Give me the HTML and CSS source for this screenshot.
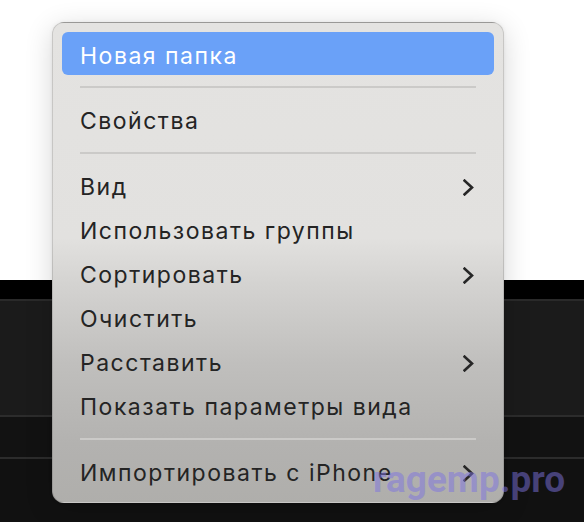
FILE: index.html
```html
<!DOCTYPE html>
<html lang="ru">
<head>
<meta charset="utf-8">
<link rel="stylesheet" href="styles.css">
</head>
<body>
<div class="desk">
  <div class="top"></div>
  <div class="band"></div>
  <div class="panel-a"></div>
  <div class="panel-b"></div>
  <div class="panel-c"></div>
</div>

<div class="menu">
  <div class="item active"><span>Новая папка</span></div>
  <div class="sep"></div>
  <div class="item"><span>Свойства</span></div>
  <div class="sep"></div>
  <div class="item"><span>Вид</span><svg class="chev" viewBox="0 0 11 17"><polyline points="1.6,1.6 9,8.5 1.6,15.4"/></svg></div>
  <div class="item"><span>Использовать группы</span></div>
  <div class="item"><span>Сортировать</span><svg class="chev" viewBox="0 0 11 17"><polyline points="1.6,1.6 9,8.5 1.6,15.4"/></svg></div>
  <div class="item"><span>Очистить</span></div>
  <div class="item"><span>Расставить</span><svg class="chev" viewBox="0 0 11 17"><polyline points="1.6,1.6 9,8.5 1.6,15.4"/></svg></div>
  <div class="item"><span>Показать параметры вида</span></div>
  <div class="sep"></div>
  <div class="item"><span>Импортировать с iPhone</span><svg class="chev" viewBox="0 0 11 17"><polyline points="1.6,1.6 9,8.5 1.6,15.4"/></svg></div>
</div>

<div class="watermark">ragemp.pro</div>
</body>
</html>
```
FILE: styles.css
```css
html, body {
  margin: 0;
  padding: 0;
}
body {
  width: 584px;
  height: 522px;
  overflow: hidden;
  position: relative;
  background: #111111;
  font-family: Inter, "Noto Sans", "Liberation Sans", sans-serif;
}
.desk {
  display: flex;
  flex-direction: column;
}
.top {
  height: 280px;
  background: #ffffff;
}
.band {
  height: 19px;
  background: #000000;
  border-bottom: 2px solid #2a2a2a;
}
.panel-a {
  height: 114px;
  background: #1b1b1b;
  border-bottom: 2px solid #2c2c2c;
}
.panel-b {
  height: 40px;
  background: #121212;
  border-bottom: 2px solid #2c2c2c;
}
.panel-c {
  height: 64px;
  background: #111111;
}
.menu {
  position: absolute;
  left: 52px;
  top: 22px;
  width: 452px;
  height: 481px;
  box-sizing: border-box;
  padding: 9px 9px 9px;
  border-radius: 12px;
  border: 1px solid rgba(0,0,0,0.12);
  background: linear-gradient(to bottom, #e4e3e1 0px, #e2e1df 215px, #d4d3d1 260px, #c0bfbd 340px, #b3b2b0 420px, #afaeab 481px);
  box-shadow: 0 6px 28px rgba(0,0,0,0.16), 0 0 4px rgba(0,0,0,0.06);
  display: flex;
  flex-direction: column;
}
.item {
  height: 44px;
  box-sizing: border-box;
  flex: none;
  display: flex;
  align-items: center;
  justify-content: space-between;
  padding: 4px 20px 0 18px;
  border-radius: 6px;
  color: #242424;
  font-size: 23px;
  letter-spacing: 1.5px;
}
.item.active {
  background: #6aa1f8;
  color: #ffffff;
  height: 43px;
}
.sep {
  flex: none;
  height: 2px;
  margin: 10.5px 18px 9.5px 18px;
  background: #cbcac8;
}
.chev {
  width: 11px;
  height: 17px;
  fill: none;
  stroke: #262626;
  stroke-width: 2.6;
  stroke-linecap: square;
}
.watermark {
  position: absolute;
  left: 373px;
  top: 461px;
  font-family: Roboto, "Liberation Sans", sans-serif;
  font-weight: 700;
  font-size: 37px;
  line-height: 37px;
  letter-spacing: 0px;
  color: rgba(125, 115, 225, 0.5);
}
```
